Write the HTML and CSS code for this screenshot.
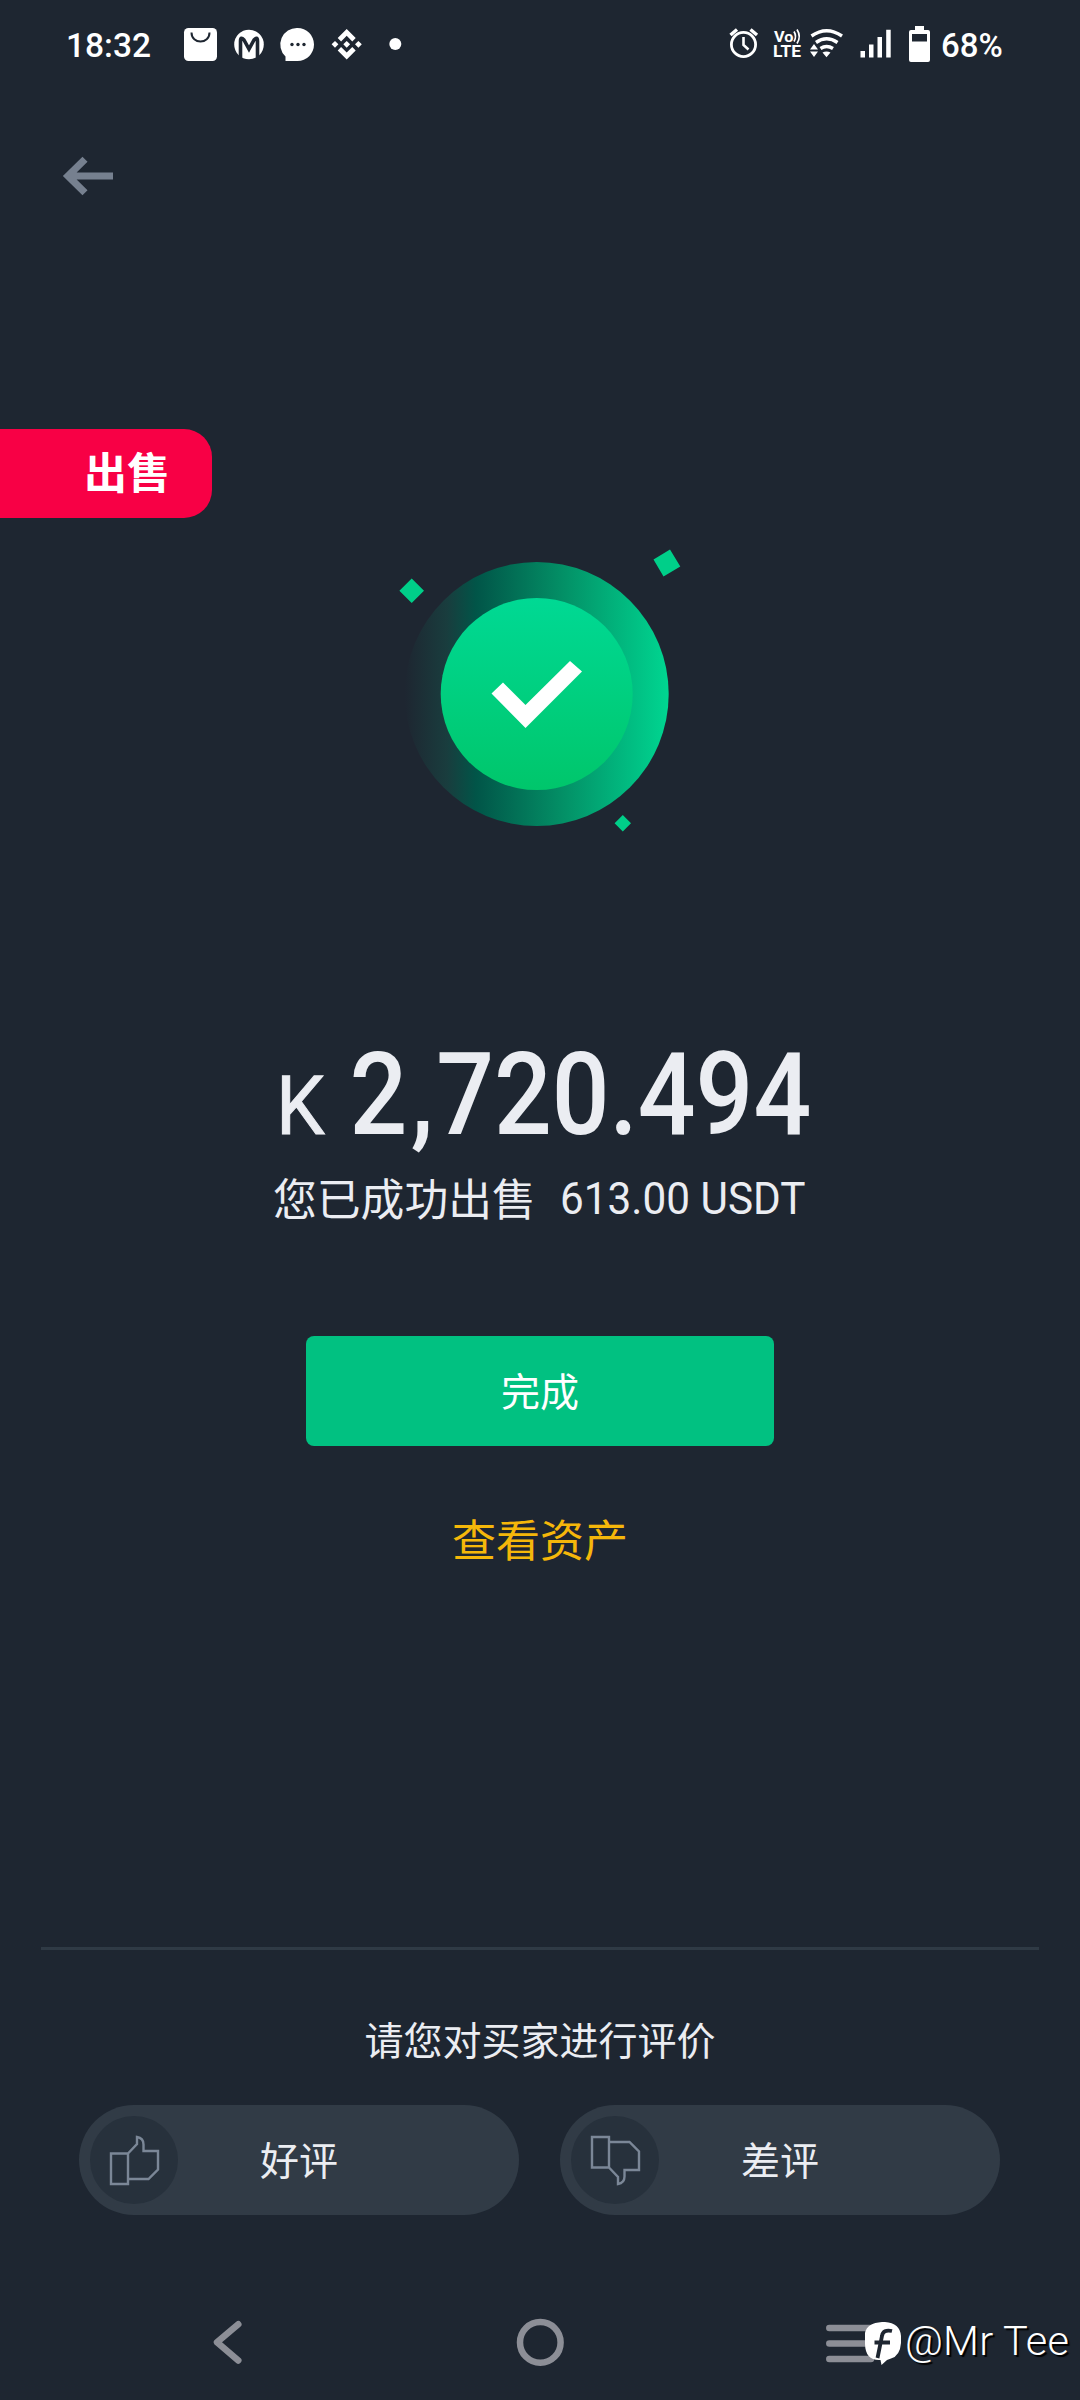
FILE: index.html
```html
<!DOCTYPE html>
<html lang="zh-CN">
<head>
<meta charset="utf-8">
<title>出售成功</title>
<link rel="stylesheet" href="styles.css">
</head>
<body>
<main class="screen">
  <header class="status">
    <span class="time">18:32</span>
    <svg class="notif" width="230" height="40" viewBox="180 24 230 40" fill="#fff">
      <rect x="184" y="28" width="33" height="33" rx="4.500"/>
      <path d="M191.500 32.500c0 12 18 12 18 0" fill="none" stroke="#1e2631" stroke-width="2"/>
      <circle cx="249" cy="44.500" r="14.800"/>
      <path d="M240.500 58V41q0-5 3.500-1l5 9 5-9q3.500-4 3.500 1V58" fill="none" stroke="#1e2631" stroke-width="3.600"/>
      <path d="M297.500 28a16.500 16.500 0 1 1 0 33H285.500V56.500A16.500 16.500 0 0 1 297.500 28z"/>
      <g fill="#1e2631"><circle cx="292" cy="44.500" r="1.700"/><circle cx="298" cy="44.500" r="1.700"/><circle cx="304" cy="44.500" r="1.700"/></g>
      <path d="M346.700 29l9 9-3.400 3.400-5.600-5.600-5.600 5.600-3.400-3.400zM346.700 59.400l9-9-3.400-3.400-5.600 5.600-5.600-5.600-3.400 3.400zM335 40.900l3.400 3.400-3.400 3.400-3.400-3.400zM358.400 40.900l3.400 3.400-3.400 3.400-3.400-3.400zM346.700 40.900l3.400 3.400-3.400 3.400-3.400-3.400z"/>
      <circle cx="395.300" cy="44" r="6"/>
    </svg>
    <svg class="system" width="210" height="40" viewBox="725 24 210 40" fill="#fff">
      <g fill="none" stroke="#fff">
        <circle cx="743.500" cy="44.500" r="12.100" stroke-width="2.800"/>
        <path d="M743.500 37v8l5 4.500" stroke-width="2.600"/>
        <path d="M730.500 35l6.500-5.500M750.500 29.500l6.500 5.500" stroke-width="3.400"/>
        <path d="M794 31.500q3 5 0 10M797 29.500q4.500 7 0 14" stroke-width="1.700"/>
        <path d="M811.500 36q15-10.500 30.500 0M816 42.500q10.500-7.500 21.500 0M820.500 48.500q6-4 12.500 0" stroke-width="3.400"/>
      </g>
      <text class="volte" x="774" y="42.200" font-size="15.500" textLength="19.500" lengthAdjust="spacingAndGlyphs">Vo</text>
      <text class="volte" x="773" y="57.200" font-size="16.500" textLength="28" lengthAdjust="spacingAndGlyphs">LTE</text>
      <path d="M822.500 52.500q4-2 8 0l-4 4.800zM810 49.500l4-5.500 4 5.500zM810 51.500h8l-4 5.500z"/>
      <path d="M860.500 51h4.500v6.500h-4.500zM869 44.500h4.500v13H869zM877.500 37h4.500v20.500h-4.500zM886.200 29.800h4.500v27.700h-4.500z"/>
      <path fill-rule="evenodd" d="M915 26h9v4h4q2 0 2 2v28q0 2-2 2h-17q-2 0-2-2V32q0-2 2-2h4zM912 34v7.500h15V34z"/>
    </svg>
    <span class="percent">68%</span>
  </header>

  <nav class="topbar">
    <svg width="52" height="42" viewBox="62 155 52 42" fill="none" stroke="#76808f" stroke-width="7.200"><path d="M85 159.300L68 176l17 16.700M69.500 176H113"/></svg>
  </nav>

  <div class="badge">出售</div>

  <svg class="success" width="320" height="320" viewBox="0 0 320 320">
    <defs>
      <linearGradient id="ring">
        <stop offset="0" stop-color="#1e2631"/>
        <stop offset=".16" stop-color="#193d3e"/>
        <stop offset=".27" stop-color="#015548"/>
        <stop offset=".6" stop-color="#039066"/>
        <stop offset="1" stop-color="#00d691"/>
      </linearGradient>
      <linearGradient id="disc" x2="0" y2="1">
        <stop offset="0" stop-color="#00d994"/>
        <stop offset="1" stop-color="#00c66b"/>
      </linearGradient>
    </defs>
    <circle cx="156.700" cy="164" r="132" fill="url(#ring)"/>
    <circle cx="156.700" cy="164" r="96" fill="url(#disc)"/>
    <path d="M111.500 163.500l11.500-11 22.500 22.500 44.500-44 12 10.500-56.500 56.500z" fill="#fff"/>
    <path d="M31.700 48.500l12.300 12.300-12.300 12.300-12.300-12.300zM273.500 29.500l16.500-10 10.300 17-16.800 10zM242.800 285l8.200 8.200-8.200 8.200-8.200-8.200z" fill="#00cf89"/>
  </svg>

  <section class="result">
    <svg class="amount" width="560" height="118" viewBox="260 1040 560 118">
      <text class="currency" x="0" y="0" font-size="81.600" transform="translate(276 1134) scale(.95 1)">K</text>
      <text class="value" x="0" y="0" font-size="114.500" transform="translate(349.500 1134) scale(.888 1)">2<tspan dx="4">,</tspan><tspan dx="3">720</tspan>.494</text>
    </svg>
    <div class="summary">
      <span>您已成功出售</span>
      <svg width="246" height="60" viewBox="560 1168 246 60"><text x="560" y="1215" font-size="44.500" textLength="245.500" lengthAdjust="spacingAndGlyphs">613.00 USDT</text></svg>
    </div>
  </section>

  <button class="done">完成</button>
  <a class="assets">查看资产</a>

  <footer class="rating">
    <p class="prompt">请您对买家进行评价</p>
    <div class="choices">
      <button class="choice">
        <span class="thumb"><svg width="52" height="52" viewBox="108 2134 52 52"><use href="#thumb-up"/></svg></span>
        <span class="label">好评</span>
      </button>
      <button class="choice">
        <span class="thumb"><svg width="52" height="52" viewBox="108 2134 52 52"><use href="#thumb-up" transform="matrix(1 0 0 -1 0 4321)"/></svg></span>
        <span class="label">差评</span>
      </button>
    </div>
    <svg width="0" height="0" class="defs"><g id="thumb-up" fill="none" stroke="#7b8797" stroke-width="2.400"><path d="M111 2153.500h17v30.500h-17zM128 2153.500l9-9.500v-7q6.500 1 6.500 7.500v6.500h14.500v18.500l-9.500 9.500H128"/></g></svg>
  </footer>

  <div class="system-nav">
    <svg width="880" height="70" viewBox="200 2308 880 70" fill="none" stroke="#8c8e96" stroke-width="6.500" stroke-linecap="round" stroke-linejoin="round">
      <path d="M238.300 2324.300L217 2342.300l21.300 18.200"/>
      <circle cx="540.300" cy="2342.400" r="20.300"/>
      <path d="M829.300 2328H872M829.300 2343.500H872M829.300 2359H871"/>
    </svg>
    <svg class="watermark" width="220" height="60" viewBox="860 2310 220 60">
      <path d="M865 2333q2-10 17-11h3q15 1 16 14v7q-1 13-10 15.500l-4 1.500-5.500 5-1-5q-15 1-15.500-16z" fill="#fff"/>
      <path d="M892 2331q-9-2-10 5l-4.500 22M874.500 2342.500h15.500" fill="none" stroke="#1e2631" stroke-width="3.800"/>
      <text x="905" y="2355" font-size="41.500" textLength="164" lengthAdjust="spacing">@Mr Tee</text>
    </svg>
  </div>
</main>
</body>
</html>
```
FILE: styles.css
```css
* { box-sizing: border-box; }
body { margin: 0; background: #1e2631; }
.screen {
  position: relative;
  display: flex;
  flex-direction: column;
  align-items: center;
  width: 1080px;
  height: 2400px;
  overflow: hidden;
  color: #ebedf2;
  font-family: Roboto, "Noto Sans CJK SC", sans-serif;
}
svg { display: block; flex: none; overflow: visible; }
button { border: 0; padding: 0; color: inherit; font-family: inherit; }

.status {
  display: flex;
  align-items: center;
  align-self: stretch;
  height: 88px;
  padding-left: 66px;
  color: #fff;
  font-size: 33.500px;
  font-weight: 500;
}
.time { width: 114px; padding-top: 2px; }
.system { margin-left: 315px; }
.percent { margin-left: 6px; padding-top: 2px; font-size: 33px; }
.volte { font-family: Roboto, sans-serif; font-weight: 700; }

.topbar { align-self: stretch; height: 341px; padding: 67px 0 0 62px; }

.badge {
  align-self: flex-start;
  display: flex;
  align-items: center;
  width: 212px;
  height: 89px;
  padding: 0 0 7px 84px;
  border-radius: 0 28px 28px 0;
  background: #f80045;
  color: #fff;
  font-size: 43px;
  font-weight: 700;
}
.success { margin-top: 12px; }

.result { width: 560px; margin-top: 190px; }
.result text { fill: #ebedf2; }
.result .currency { font-weight: 400; stroke: #ebedf2; stroke-width: 1; }
.value { font-weight: 500; }
.summary {
  display: flex;
  align-items: center;
  justify-content: space-between;
  height: 60px;
  margin-top: 10px;
  padding: 0 14px 2px 13px;
  font-size: 43.800px;
}

.done {
  width: 468px;
  height: 110px;
  margin-top: 108px;
  padding-bottom: 5px;
  border-radius: 8px;
  background: #01c181;
  color: #fff;
  font-size: 39px;
}
.assets {
  height: 60px;
  margin-top: 66px;
  color: #f5b70a;
  font-size: 44px;
  line-height: 60px;
}

.rating {
  width: 998px;
  height: 268px;
  margin-top: 375px;
  border-top: 3px solid #2f3a45;
}
.prompt { margin: 62px 0 0; font-size: 39px; line-height: 60px; text-align: center; }
.choices { display: flex; gap: 41px; margin-top: 33px; padding-left: 38px; }
.choice {
  display: flex;
  align-items: center;
  width: 440px;
  height: 110px;
  padding-left: 11px;
  border-radius: 55px;
  background: #313b46;
  font-size: 39px;
}
.thumb {
  display: grid;
  place-items: center;
  width: 88px;
  height: 88px;
  border-radius: 50%;
  background: #27313c;
}
.label { margin-left: 82px; padding-bottom: 4px; }
.defs { position: absolute; }

.system-nav { position: relative; align-self: flex-end; width: 880px; margin-top: 93px; }
.watermark { position: absolute; left: 660px; top: 2px; }
.watermark text { fill: #fff; font-weight: 300; text-shadow: 2px 2px 1px #000; }
```
